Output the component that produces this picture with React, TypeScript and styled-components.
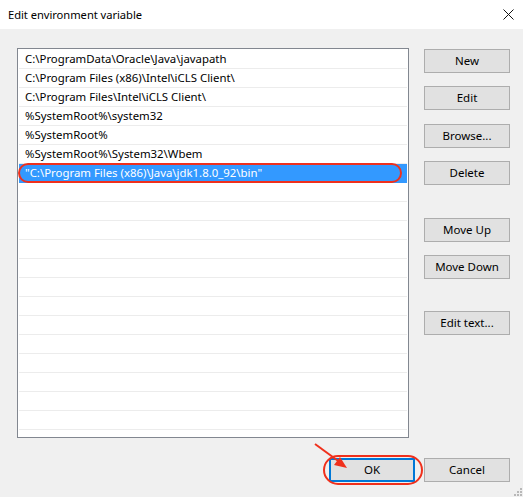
import React from "react";
import styled, { createGlobalStyle } from "styled-components";

const Global = createGlobalStyle`
  html, body { margin: 0; padding: 0; background: #f0f0f0; }
  body { font-family: "Noto Sans", "Liberation Sans", sans-serif; font-size: 11.5px; color: #000; }
  * { box-sizing: border-box; }
`;

const Window = styled.div`
  width: 523px;
  height: 497px;
  display: flex;
  flex-direction: column;
  background: #f0f0f0;
  position: relative;
  overflow: hidden;
`;

const TitleBar = styled.div`
  height: 29px;
  background: #fff;
  display: flex;
  align-items: center;
  justify-content: space-between;
  padding: 0 9px 0 8px;
  font-size: 11.2px;
  letter-spacing: -0.05px;
`;

const Title = styled.span`
  line-height: 29px;
  padding-bottom: 1px;
`;

const Body = styled.div`
  flex: 1;
  padding: 19px 13px 0 17px;
  display: flex;
  flex-direction: column;
`;

const Main = styled.div`
  display: flex;
  align-items: flex-start;
`;

const ListBox = styled.div`
  width: 392px;
  height: 390px;
  border: 1px solid #828790;
  background: #fff;
  padding: 1px;
  overflow: hidden;
`;

const Row = styled.div<{ $selected?: boolean }>`
  position: relative;
  height: 19px;
  line-height: 18px;
  padding-left: 6px;
  border-bottom: 1px solid #ececec;
  white-space: nowrap;
  font-size: 11.4px;
  background: ${(p) => (p.$selected ? "#3399ff" : "#fff")};
  color: ${(p) => (p.$selected ? "#fff" : "#000")};
  border-bottom-color: ${(p) => (p.$selected ? "#3399ff" : "#ececec")};
`;

const RowOval = styled.span`
  position: absolute;
  left: -1px;
  right: 5px;
  top: -1px;
  bottom: -1px;
  border: 2px solid #f0301c;
  border-radius: 11px;
  pointer-events: none;
`;

const ButtonColumn = styled.div`
  margin-left: 15px;
  padding-top: 1px;
  display: flex;
  flex-direction: column;
  width: 86px;
`;

const Button = styled.button<{ $gap?: number; $default?: boolean }>`
  position: relative;
  margin-top: ${(p) => p.$gap ?? 0}px;
  width: 86px;
  height: 24px;
  padding: 0 0 1px;
  background: #e1e1e1;
  border: ${(p) => (p.$default ? "2px solid #0078d7" : "1px solid #adadad")};
  font-family: "Noto Sans", "Liberation Sans", sans-serif;
  font-size: 11.5px;
  color: #000;
  display: flex;
  align-items: center;
  justify-content: center;
`;

const Footer = styled.div`
  margin-top: 20px;
  display: flex;
  justify-content: flex-end;
  gap: 9px;
`;

const ButtonOval = styled.span`
  position: absolute;
  left: -8px;
  right: -10px;
  top: -5px;
  bottom: -5px;
  border: 2px solid #f0301c;
  border-radius: 16px;
  pointer-events: none;
`;

const Arrow = styled.svg`
  position: absolute;
  left: -18px;
  top: -18px;
  overflow: visible;
  pointer-events: none;
`;

const Grip = styled.svg`
  position: absolute;
  right: 1px;
  bottom: 1px;
`;

const CloseIcon = () => (
  <svg width="11" height="11" viewBox="0 0 11 11">
    <path d="M0.5 0.5 L10.5 10.5 M10.5 0.5 L0.5 10.5" stroke="#111" strokeWidth="1" fill="none" />
  </svg>
);

const paths = [
  "C:\\ProgramData\\Oracle\\Java\\javapath",
  "C:\\Program Files (x86)\\Intel\\iCLS Client\\",
  "C:\\Program Files\\Intel\\iCLS Client\\",
  "%SystemRoot%\\system32",
  "%SystemRoot%",
  "%SystemRoot%\\System32\\Wbem",
  "\"C:\\Program Files (x86)\\Java\\jdk1.8.0_92\\bin\"",
];

const rows = [...paths, ...Array(15).fill("")];

export default function App() {
  return (
    <>
      <Global />
      <Window>
        <TitleBar>
          <Title>Edit environment variable</Title>
          <CloseIcon />
        </TitleBar>
        <Body>
          <Main>
            <ListBox>
              {rows.map((r, i) => (
                <Row key={i} $selected={i === 6}>
                  {r}
                  {i === 6 && <RowOval />}
                </Row>
              ))}
            </ListBox>
            <ButtonColumn>
              <Button>New</Button>
              <Button $gap={13}>Edit</Button>
              <Button $gap={14}>Browse...</Button>
              <Button $gap={13}>Delete</Button>
              <Button $gap={33}>Move Up</Button>
              <Button $gap={13}>Move Down</Button>
              <Button $gap={32}>Edit text...</Button>
            </ButtonColumn>
          </Main>
          <Footer>
            <Button $default>
              OK
              <ButtonOval />
              <Arrow width="40" height="30" viewBox="0 0 40 30">
                <line x1="2" y1="2" x2="28" y2="21" stroke="#f0301c" strokeWidth="2" />
                <polygon points="34,26 21,23 27,15" fill="#f0301c" />
              </Arrow>
            </Button>
            <Button>Cancel</Button>
          </Footer>
        </Body>
        <Grip width="10" height="10" viewBox="0 0 10 10">
          {[
            [8, 2],
            [5, 5],
            [8, 5],
            [2, 8],
            [5, 8],
            [8, 8],
          ].map(([x, y], i) => (
            <rect key={i} x={x} y={y} width="2" height="2" fill="#b8b8b8" />
          ))}
        </Grip>
      </Window>
    </>
  );
}
